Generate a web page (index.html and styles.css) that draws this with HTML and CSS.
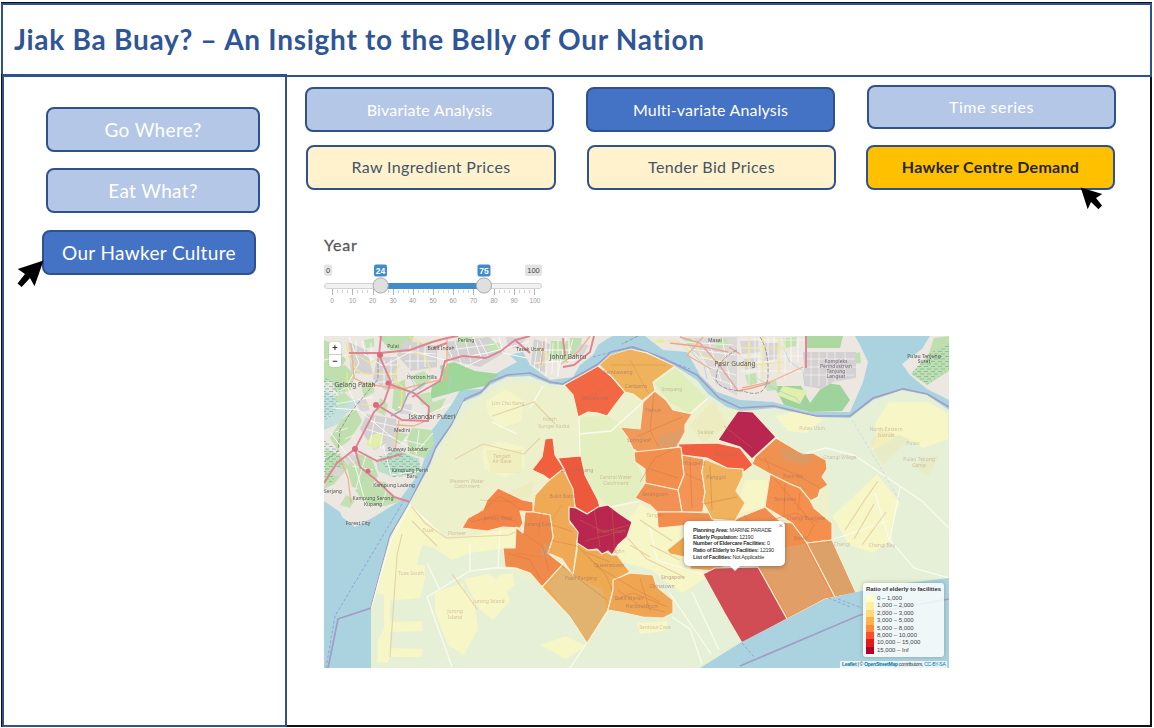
FILE: index.html
```html
<!DOCTYPE html>
<html lang="en">
<head>
<meta charset="utf-8">
<title>Jiak Ba Buay?</title>
<link rel="stylesheet" href="styles.css">
</head>
<body>
<div class="app">
<header class="header"><h1 class="title">Jiak Ba Buay? – An Insight to the Belly of Our Nation</h1></header>
<div class="body">
<nav class="side">
  <button class="btn soft big">Go Where?</button>
  <button class="btn soft big">Eat What?</button>
  <button class="btn strong big current">Our Hawker Culture</button>
</nav>
<main class="main">
  <div class="tabs first">
    <button class="btn soft">Bivariate Analysis</button>
    <button class="btn strong">Multi-variate Analysis</button>
    <button class="btn soft raised">Time series</button>
  </div>
  <div class="tabs second">
    <button class="btn cream">Raw Ingredient Prices</button>
    <button class="btn cream">Tender Bid Prices</button>
    <button class="btn gold">Hawker Centre Demand</button>
  </div>
  <section class="filter">
    <div class="year">Year</div>
    <svg class="slider" width="230" height="46" viewBox="320 262 230 46">
      <rect x="324" y="264.500" width="8" height="11.500" rx="2" fill="#e3e3e3"/><rect x="525" y="264.500" width="17" height="11.500" rx="2" fill="#e3e3e3"/>
      <rect x="324.500" y="283.500" width="217" height="5" rx="2.500" fill="#f1f1f0" stroke="#d2d2d2"/>
      <rect x="381" y="283" width="103" height="6" fill="#428bca"/>
      <path d="M332.500 289v6M352.500 289v6M373.500 289v6M393.500 289v6M413.500 289v6M433.500 289v6M453.500 289v6M473.500 289v6M494.500 289v6M514.500 289v6M534.500 289v6" stroke="#b5b5b5"/>
      <path d="M337.500 290v3M342.500 290v3M347.500 290v3M357.500 290v3M362.500 290v3M367.500 290v3M378.500 290v3M388.500 290v3M398.500 290v3M403.500 290v3M408.500 290v3M418.500 290v3M423.500 290v3M428.500 290v3M438.500 290v3M443.500 290v3M448.500 290v3M458.500 290v3M463.500 290v3M468.500 290v3M499.500 290v3M504.500 290v3M509.500 290v3M519.500 290v3M524.500 290v3M529.500 290v3" stroke="#d0d0d0"/>
      <rect x="374" y="264.500" width="13" height="12" rx="2" fill="#428bca"/><rect x="477.500" y="264.500" width="13" height="12" rx="2" fill="#428bca"/>
      <circle cx="380.700" cy="285.500" r="7.600" fill="#dfdfdf" stroke="#aaa"/><circle cx="484" cy="285.500" r="7.600" fill="#dfdfdf" stroke="#aaa"/>
      <g font-family="Liberation Sans, sans-serif" font-size="7.500" text-anchor="middle" fill="#444"><text x="328" y="273">0</text><text x="533.500" y="273">100</text><text x="380.500" y="273.500" font-size="8.500" fill="#fff" font-weight="bold">24</text><text x="484" y="273.500" font-size="8.500" fill="#fff" font-weight="bold">75</text></g>
      <g font-family="Liberation Sans, sans-serif" font-size="6.500" text-anchor="middle" fill="#999"><text x="332" y="303">0</text><text x="352.500" y="303">10</text><text x="372.500" y="303">20</text><text x="393" y="303">30</text><text x="412.500" y="303">40</text><text x="433" y="303">50</text><text x="453" y="303">60</text><text x="473.500" y="303">70</text><text x="494" y="303">80</text><text x="514" y="303">90</text><text x="535" y="303">100</text></g>
    </svg>
  </section>
  <section class="map">
    <svg class="tiles" width="625" height="332" viewBox="324 336 625 332">
      <defs>
        <filter id="soft"><feGaussianBlur stdDeviation="0.450"/></filter>
        <clipPath id="view"><rect x="324" y="336" width="625" height="332"/></clipPath>
        <pattern id="marsh" width="7" height="5" patternUnits="userSpaceOnUse"><path d="M0 1.500h4M3 4h4" stroke="#78b8a5" stroke-width=".8"/></pattern>
        <clipPath id="land"><path d="M324 336H613L607 339L598 345L593 355L580 365L573 377L550 380L530 365L523 352L510 355L517 362L502 370L488 379L483 389L460 390L452 404L432 430L430 442L420 472L398 502L382 512L372 518L355 527L342 517L340 512L324 501ZM645 336H855L860 345L868 362L863 382L850 412L807 412L773 402L740 400L717 392L700 375L687 352L663 350Z"/></clipPath>
        <clipPath id="sg"><path d="M410 502L430 465L436 449L452 425L463 402L480 395L490 385L507 377L530 376L550 384L563 385L598 366L610 355L630 349L647 352L675 366L697 380L708 394L727 407L740 411L753 410L775 408L793 412L817 417L850 418L873 400L902 390L927 395L949 410V578L907 583L856 592L825 599L740 643L700 668H371V608L390 537Z"/></clipPath>
      </defs>
      <g clip-path="url(#view)" filter="url(#soft)">
      <rect x="324" y="336" width="625" height="332" fill="#aad3df"/>
      <!-- mainland coast -->
      <g fill="#ece8e1">
        <path d="M324 336H613L607 339L598 345L593 355L580 365L573 377L550 380L530 365L523 352L510 355L517 362L502 370L488 379L483 389L460 390L452 404L432 430L430 442L420 472L398 502L382 512L372 518L355 527L342 517L340 512L324 501Z"/>
        <path d="M645 336H855L860 345L868 362L863 382L850 412L807 412L773 402L740 400L717 392L700 375L687 352L663 350Z"/>
        <path d="M930 336L922 349L902 364L910 375L927 389L949 400V336Z"/>
      </g>
      <path d="M324 391L336 396L344 405L352 398L360 402L347 413L338 424L324 430Z" fill="#c4dfdc"/>
      <g fill="#bfdfae">
        <path d="M324 340L337 346L346 360L333 380L324 383Z"/><path d="M329 370L345 365L355 376L350 391L336 393Z"/>
        <path d="M440 366L454 362L475 371L499 374L485 386L455 392L430 399L432 386L443 380Z" fill="#9fd69a"/>
        <path d="M412 428L432 430L434 444L425 458L410 454L407 440Z"/><path d="M378 336H414L409 350L390 350Z"/>
        <path d="M394 385L405 379L406 400L399 413L392 408Z"/><path d="M357 453L372 459L378 476L368 491L352 487L347 467Z"/>
        <path d="M341 420L356 409L362 421L349 441L337 449L330 438Z"/><path d="M376 461L395 449L419 459L421 473L393 477L378 471Z" fill="#bddfc8"/>
        <path d="M326 449L340 455L349 466L334 484L324 489Z"/><path d="M355 490L370 485L390 492L401 501L385 506L366 504Z"/>
        <path d="M805 336H843L840 348L806 348Z" fill="#add9a0"/><path d="M774 386L801 386L810 403L825 383L840 385L850 400L842 411L809 412L784 405Z" fill="#9fd39c"/>
        <path d="M853 354L860 352L861 363L852 364Z"/><path d="M934 338L949 336V371L927 385L911 374L928 356Z"/>
        <path d="M551 341H568V363L550 359Z"/><path d="M570 338H582L579 352L570 355Z"/>
      </g>
      <g fill="#d4d1d3">
        <path d="M377 357H397V388L385 390L373 379Z"/><path d="M367 414L396 419L399 436L374 450L360 429Z"/>
        <path d="M803 352H856V378L833 382L822 389L805 386Z"/><path d="M348 342L367 350L373 374L351 373Z"/>
        <path d="M404 340L437 346V367L411 371L397 355Z"/><path d="M681 338L737 337V396L716 384L704 362Z" opacity=".7"/>
        <path d="M445 342L489 337L505 352L480 367L449 360Z"/><path d="M534 339L550 344L545 373L531 364Z"/>
      </g>
      <path d="M324 377L342 386L335 413L324 421ZM378 457L396 449L420 461L421 475L393 477ZM927 355L949 343V369L927 385L911 374ZM324 440L339 451L345 464L331 483L324 483Z" fill="url(#marsh)"/>
      <path d="M372 435L381 432L383 443L375 449L365 444ZM777 395L783 386L807 391L800 404ZM651 342L663 338L664 343Z" fill="#e1efaa"/>
      <!-- parks and blocks between the main roads -->
      <g clip-path="url(#land)">
        <g fill="#c3e2b3"><path d="M334 398L344 392L351 399L342 408ZM361 385L371 381L375 392L364 398ZM411 376L424 371L431 379L420 390ZM380 398L388 404L385 416L376 411ZM408 434L400 444L390 441L396 432ZM346 495L355 500L350 508L340 505ZM375 481L386 482L388 491L378 489ZM417 395L430 392L433 403L422 405ZM427 404L446 398L440 410L429 415ZM458 337H473L468 345L456 344ZM490 341L501 344L497 353L487 350ZM684 337L694 340L690 348ZM715 340L727 338L728 346L717 349ZM745 375L756 373L757 383L748 386ZM783 338L797 337L796 346L785 348ZM765 382L776 380L778 390L767 391ZM364 340L374 338L374 347L366 348Z"/></g>
        <g fill="#d9d4d7"><path d="M356 400L366 399L370 410L360 412ZM398 405L412 404L411 414L400 414ZM344 457L353 453L357 461L348 464ZM385 453L395 447L394 437L386 440ZM506 337L526 338L519 349L508 347ZM571 359L583 355L589 345L580 344ZM740 341L759 340L760 352L742 354ZM765 343L778 343L777 359L764 361ZM744 359L757 358V368L745 370ZM336 466L344 470L339 477L331 474ZM422 350L436 349L436 358L423 360Z"/></g>
        <g fill="none" stroke="#aacfdd" stroke-width=".8"><path d="M784 349L790 362L803 371L805 386M757 378L775 389L796 398L806 409M440 372L451 378L449 391M408 373L415 386L405 401M360 460L366 473L360 486M534 348L542 358L540 372M697 340L692 353L704 365L707 379"/></g>
        <g fill="none" stroke="#fff" stroke-width=".7"><path d="M329 396L362 380M336 404L373 397M356 340V353M362 341L366 356M371 343V361M384 360V387M391 359V387M378 365H397M378 374H397M378 382H396M370 421L397 427M366 429L392 437M375 417L370 444M386 418L380 448M410 345V369M418 343V369M425 346V367M401 352L436 354M405 361L436 361M455 341L461 364M465 340L471 362M479 339L488 356M493 338L500 350M449 350L495 344M684 342L733 345M690 349L736 355M700 357L736 365M706 366L736 375M712 377L735 386M693 339L709 371M708 338L721 381M722 338L732 391M740 348H768M742 363L775 361M755 338V370M768 337V366M774 337V360M791 337V365M798 337V362M538 342L534 368M543 342L539 373M553 343L552 374M558 340V376M573 339L568 357M335 432L348 428M345 439L354 435M352 466L373 470M366 455L356 488M388 485L382 505M404 440L425 445M419 430L416 455"/></g>
      </g>
      <!-- streets -->
      <g fill="none" stroke="#fbfaf3" stroke-width="1">
        <path d="M324 360L361 352L383 366L412 351L445 360L487 353L529 342M332 408L359 410L389 435L416 452L433 433M349 337L359 363L347 386L357 407M330 432L355 465L366 505M440 336L452 356L442 371M473 337L482 359L465 367M499 337L503 353L527 358M398 407L425 416L451 404M383 445L391 475L419 471M534 350H572M535 363L575 360M546 337V376M566 337L557 377"/>
        <path d="M805 359H855M805 367H858M805 375H854M811 352V386M819 352V386M827 352V386M835 352V382M845 352V378M741 340H804M742 356H803M741 371H803M749 337V387M759 337V387M785 337V379" stroke-width=".6"/>
      </g>
      <g fill="none" stroke="#eee88d" stroke-width="1.200">
        <path d="M346 342Q351 378 374 374T397 388M409 337L427 345L441 338M400 365Q389 378 402 386L401 411M347 372V391M361 404L375 406M409 350L425 356L431 370M348 350L370 363L384 355"/>
        <path d="M749 337V362L740 368M763 336V379M779 338V374M741 348H790M742 366L784 362M534 347L549 355L538 369M655 342L675 340L692 353M690 337L703 356L736 365"/>
      </g>
      <g fill="none" stroke="#f1b18d" stroke-width="1.300"><path d="M351 343L354 378L366 384L402 389L448 378M447 337V380M397 425L414 426L430 419M399 420L395 452M339 456L348 478L351 503M742 388L770 382L803 367M590 336L579 351L561 364M703 337L687 355L711 369M544 341L541 365"/></g>
      <g fill="none" stroke="#df8493" stroke-width="1.900">
        <path d="M381 336L379 355L391 382L384 402L374 412L355 449L360 467L375 479L394 497L410 502"/>
        <path d="M349 353H380L410 350L432 342L447 338L458 336"/>
        <path d="M389 384L414 393L429 407L428 421L402 420L374 403"/>
        <path d="M412 397L440 381L445 361L463 356L486 358L501 351L515 340L530 336M515 340L530 353M433 348L447 343"/>
        <path d="M355 449L337 463L324 483M358 451L377 461L402 454M594 336L590 352L574 365L563 367M563 338L565 356M806 336V368"/>
        <path d="M680 337L700 343L720 366L738 391L752 388L770 383M729 347L740 354M670 343L704 347L728 352" stroke="#eaa494" stroke-width="1.400"/>
      </g>
      <g fill="#d96b80"><circle cx="380" cy="355" r="3"/><circle cx="388" cy="383" r="2.500"/><circle cx="376" cy="405" r="3"/><circle cx="355" cy="449" r="3"/><circle cx="368" cy="471" r="2.500"/></g>
      <g fill="none" stroke="#8b858f" stroke-width=".8" stroke-dasharray="4 1.500"><path d="M378 358V379L351 412L340 430L338 451L325 461M760 337Q769 350 768 375T743 391M638 336L622 344M737 350Q716 360 716 380Q720 390 743 391"/></g>
      <path d="M391 416L401 411L408 394L425 383" fill="none" stroke="#b3a0bf" stroke-width="1.500"/>
      <!-- sea boundaries -->
      <g fill="none" stroke="#a39dc6" stroke-width="1.700">
        <path d="M328 668L338 619L371 608L390 536L410 502L430 462L436 447L452 424L465 399L481 392L490 382L507 375L530 373L550 382L563 384L598 364L611 352L633 347L663 358L697 375L719 398L740 408L774 406L816 416L850 416L873 398L903 389L927 394L949 407"/>
        <path d="M740 666L860 615L949 599"/>
      </g>
      <g fill="none" stroke="#8ba5dd" stroke-width="1" stroke-dasharray="3 2"><path d="M326 668L335 616L403 502M593 357L630 347L690 369M838 599L862 608M824 596L850 607M742 643L754 657"/></g>
      <!-- planning areas backdrop -->
      <g clip-path="url(#sg)">
        <rect x="365" y="345" width="585" height="325" fill="#e5f0d6"/>
        <path d="M411 503L456 424L480 397L510 380L564 388L631 352L716 406L752 413L735 438L810 458L830 490L831 540L757 520L703 574L690 592L640 560L620 552L543 586L503 567L504 535L479 548L436 548L411 533L401 576L389 593L374 586L391 539Z" fill="#edf1cb"/>
        <g fill="#f6f6c7">
          <path d="M395 527L411 505L434 528L450 540L500 530L515 529V547L470 553L452 560L434 548L422 545L417 565H425V579L420 598L390 601V622L422 621V631L390 632V648L422 649V657H390L387 663L377 662L378 639L384 629V595L377 593Z"/>
          <path d="M435 592L463 583L464 590L474 600L478 629L464 655L448 645L435 612Z"/>
          <path d="M464 579L488 574L504 584L510 601L493 620L479 609Z"/><path d="M493 586L498 575L513 573L515 585L506 592Z"/>
          <path d="M832 516L850 500L877 474L900 503L892 523L890 541L873 553L849 545Z"/>
          <path d="M875 423L889 402L929 402L948 414V439L923 448L900 435L871 451L876 438Z"/>
          <path d="M775 416L797 411L824 419L806 433L788 431Z"/><path d="M486 401L506 389L524 401L521 421L500 429L488 414Z" opacity=".7"/>
          <path d="M482 449L500 441L524 447L525 468L505 478L484 469Z" opacity=".7"/><path d="M617 535L640 504L680 525L706 578L682 593L651 570L617 560Z"/>
          <path d="M735 515L745 480L770 480L765 506ZM540 645L566 636L586 646L566 659ZM637 623L668 621L665 631L640 634Z"/>
        </g>
        <g fill="#dfeebb"><path d="M578 417L607 416L637 434L634 459L646 483L640 502L610 507L587 488L579 457Z" opacity=".7"/><path d="M654 383L676 368L707 398L689 413L670 403Z"/></g>
        <g fill="#eee5af" opacity=".4"><path d="M486 450H522V473H491ZM482 505L535 480L530 497ZM881 429L910 439L883 465L870 442ZM910 465L939 455L928 476ZM690 425L713 400L727 425L703 443Z"/></g>
        <!-- residential boundaries -->
        <g fill="none" stroke="#fafbee" stroke-width="1.300">
          <path d="M371 608L391 540L410 505L445 538M543 587L531 573L516 568L495 568L470 571L427 597L452 667M427 563L440 590M530 408L543 386M579 417L580 457M579 434L611 431L642 403M690 414L708 398M607 508L615 506L640 501M608 611L570 668M692 592L719 650M672 617L690 629L702 664M669 592L711 654M753 458L803 454L826 448L854 455L922 501L949 528M900 487L890 540L914 568L949 578M875 493L889 540M492 422L517 434M831 540L888 521M470 570V544M498 568L500 531M535 498L550 480M650 527L657 560L705 575"/>
        </g>
        <g fill="none" stroke="#e5d4a4" stroke-width="1.100"><path d="M411 506L425 523L446 538L509 535L521 529M412 521L437 546M402 534L397 555L390 657M452 574L477 609M455 459L483 444L524 454L540 438M492 416L534 402L555 424M624 534L647 559L682 576M845 530L866 498L878 481M854 539L874 504M862 545L886 512M650 545L680 560M630 545L650 557M640 520L672 541"/></g>
        <g fill="none" stroke="#d9cfe2" stroke-width=".8" stroke-dasharray="3 2"><path d="M852 420L882 470L900 501M635 616L613 600"/></g>
        <!-- shaded planning areas -->
        <g stroke="#f8efd4" stroke-width="1.200" stroke-linejoin="round">
          <path fill="#f26745" d="M564 385L598 366L612 377L625 392L615 405L607 416L598 413L588 412L578 417L573 395Z"/>
          <path fill="#efb25d" d="M599 365L610 355L630 349L647 353L675 366L653 382L655 391L642 401L633 394L625 392L612 377Z"/>
          <path fill="#ef9a59" d="M655 391L666 400L673 410L692 414L685 425L685 432L677 447L640 453L633 449L628 438L620 427L640 429L643 402Z"/>
          <path fill="#f25f40" d="M678 444L717 443L740 448L753 465L744 472L727 468L707 458L682 455Z"/>
          <path fill="#b92750" d="M718 440L728 425L738 411L753 412L776 437L752 459L740 447Z"/>
          <path fill="#f0914f" d="M776 438L803 454L813 453L826 460L827 469L822 477L828 485L820 490L818 497L810 501L800 488L790 484L770 474L752 464L755 457Z"/>
          <path fill="#f48f4e" d="M770 474L790 484L800 488L810 500L814 508L832 523L832 540L807 543L792 523L765 507Z"/>
          <path fill="#f28e4c" d="M715 530L740 517L765 507L781 522L792 523L807 543L835 597L825 599L787 619L757 566L730 560Z"/>
          <path fill="#e79654" d="M832 540L856 593L835 597L807 543Z"/>
          <path fill="#f28f50" d="M634 452L663 449L681 447L682 455L684 475L678 490L645 483L645 469L635 462Z"/>
          <path fill="#f39555" d="M682 455L704 459L702 472L705 492L703 512L682 512L678 490L684 475Z"/>
          <path fill="#f19152" d="M645 483L678 490L682 512L657 512L650 505L635 498Z"/>
          <path fill="#f18d4e" d="M657 512H682L712 513L715 524L690 525L658 528Z"/>
          <path fill="#f0b25c" d="M704 459L727 468L743 469V476L736 491L745 503L735 521L712 519L703 502L705 492L702 472Z"/>
          <path fill="#f25e3d" d="M545 439L553 438L555 455L564 469L550 480L543 475L532 470L542 457Z"/>
          <path fill="#ee593c" d="M558 458L581 456L585 475L598 500L600 507L587 514L575 507L572 490L564 469Z"/>
          <path fill="#f0aa56" d="M563 469L573 489L575 507L569 509L570 523L580 532L577 545L573 575L562 559L548 553L553 537L550 515L533 512L535 495L547 482Z"/>
          <path fill="#f38548" d="M462 528L468 518L483 510L487 500L498 488L523 500L533 502L533 512L520 511L523 523L520 528L503 527L487 531Z"/>
          <path fill="#f08a4c" d="M516 527L523 533L525 512H533L550 515L553 537L548 553L563 565L542 587L530 573L516 568L505 567L503 548H515Z"/>
          <path fill="#edaa53" d="M577 540L588 550L602 550L612 555L617 555L630 572L615 580L613 590L608 610L587 643L570 617L542 587L563 564L573 575L577 550Z"/>
          <path fill="#f0a552" d="M630 573L653 575L657 587L673 600L673 613L663 618L643 617L620 612L608 610L613 590L613 580Z"/>
          <path fill="#b92750" d="M569 507L576 508L587 514L598 507L608 505L620 514L632 522L627 537L618 545L612 555L608 551L602 554L597 549L588 550L577 543L578 532L569 520Z"/>
          <path fill="#f0a64b" d="M667 550L683 537L715 540L738 560L715 571L691 569L685 557L670 554Z"/>
          <path fill="#d14d57" d="M703 574L715 568L758 567L787 619L742 643L725 614Z"/>
        </g>
        <path d="M562 567L579 578L603 590L607 610L587 640L569 615L547 586Z" fill="#d8b985" opacity=".55"/>
        <path d="M759 566L764 550L805 544L832 596L825 598L788 617ZM832 542L855 592L836 596L808 545Z" fill="#d6a878" opacity=".6"/>
        <path d="M660 435L683 430L676 446L657 448ZM780 447L813 456L806 466L782 460ZM545 543L552 550L546 560L540 551Z" fill="#c7a47d" opacity=".45"/>
        <!-- streets inside the shaded areas -->
        <g fill="none" stroke="#c9723f" stroke-width=".8" opacity=".5">
          <path d="M654 393L650 430L658 446M579 401L598 392L612 380M584 412L577 403M552 445L546 475M571 463L585 500M480 512L500 496L522 510M471 522L498 515L519 523M523 533L543 547L549 572M553 525L573 532M550 540L577 546L600 568L633 588L660 602M585 541L626 530M580 520L604 532L629 525M594 508L600 547M612 508L615 553M615 600L633 593L668 607M640 482L655 458L674 449M650 469L678 478M690 457L692 508M710 466L712 510M686 474L702 481M756 457L795 474L820 488M775 479L814 525L806 540M765 522L795 513L818 522M703 504L737 497M724 426L752 448M687 448L735 460M638 436L682 417M558 563L579 579L607 600M640 578L650 611M744 515L768 552M785 484L784 516M588 557L606 575L612 590M582 551L610 562M618 590L640 606L665 612M508 553L530 560L541 580M765 457L770 470M800 493L798 510"/>
          <path d="M562 505L551 521M542 512L538 537M630 360L649 394M603 372L621 390M611 365H666M480 500L520 502M514 553L542 557" opacity=".6"/>
        </g>
      </g>
      <!-- place names -->
      <g font-family="Noto Sans, sans-serif" text-anchor="middle" fill="#555" font-size="5">
        <g font-size="6.500"><text x="355" y="387">Gelang Patah</text><text x="432" y="419" font-size="6.500">Iskandar Puteri</text><text x="568" y="359">Johor Bahru</text><text x="735" y="366">Pasir Gudang</text></g>
        <text x="393" y="348">Pulai</text><text x="441" y="350">Bukit Indah</text><text x="466" y="342">Perling</text><text x="422" y="379">Horizon Hills</text><text x="402" y="432">Medini</text><text x="408" y="451">Sunway Iskandar</text><text x="410" y="472">Kampung Perin</text><text x="412" y="478">Baru</text><text x="394" y="487">Kampung Ladang</text><text x="373" y="500">Kampung Serong</text><text x="358" y="525">Forest City</text><text x="373" y="506">Kupang</text><text x="333" y="493">Serjang</text><text x="530" y="351">Tasek Utara</text><text x="715" y="342">Masai</text>
        <g fill="#766979"><text x="836" y="363">Kompleks</text><text x="836" y="368">Perindustrian</text><text x="836" y="373">Tanjung</text><text x="836" y="378">Langsat</text></g><text x="924" y="358">Pulau Tanjung</text><text x="924" y="363">Surat</text>
      </g>
      <g font-family="Noto Sans, sans-serif" text-anchor="middle" font-size="5" fill="#a36f64" opacity=".65">
        <g opacity=".6"><text x="508" y="405">Lim Chu Kang</text><text x="502" y="458">Tengah</text><text x="502" y="463">Air Base</text><text x="467" y="483">Western Water</text><text x="467" y="488">Catchment</text><text x="550" y="421">North</text><text x="554" y="428">Sungei Kadut</text><text x="616" y="479">Central Water</text><text x="616" y="485">Catchment</text><text x="672" y="391">Simpang</text><text x="706" y="434">Seletar</text><text x="812" y="430">Pulau Ubin</text><text x="840" y="459">Changi Village</text><text x="886" y="431">North-Eastern</text><text x="886" y="437">Islands</text><text x="913" y="445">Pulau</text><text x="919" y="461">Pulau Tekong</text><text x="919" y="467">Camp</text><text x="428" y="532">Tuas</text><text x="457" y="535">Pioneer</text><text x="411" y="575">Tuas South</text><text x="455" y="613">Jurong</text><text x="455" y="619">Island</text><text x="489" y="603">Jurong Island</text><text x="842" y="546">Changi</text><text x="882" y="547">Changi Bay</text><text x="655" y="629">Sentosa Cove</text><text x="655" y="517">Tanglin</text><text x="616" y="553">Tanglin</text></g>
        <text x="595" y="400">Woodlands</text><text x="618" y="374">Sembawang</text><text x="636" y="388">Canberra</text><text x="653" y="412">Yishun</text><text x="639" y="442">Springleaf</text><text x="726" y="456">Sengkang</text><text x="793" y="478">Pasir Ris</text><text x="785" y="501">Tampines</text><text x="806" y="520">Changi Business</text><text x="800" y="540">Simei</text><text x="694" y="465">Hougang</text><text x="716" y="479">Punggol</text><text x="655" y="496">Serangoon</text><text x="577" y="472">Bukit Panjang</text><text x="563" y="498">Bukit Batok</text><text x="498" y="520">Jurong West</text><text x="538" y="526">Jurong East</text><text x="581" y="580">Pasir Panjang</text><text x="609" y="567">Queenstown</text><text x="629" y="600">Bukit Merah</text><text x="642" y="608">HarbourFront</text><text x="611" y="533">Bukit Timah</text><text x="673" y="579">Singapore</text><text x="662" y="588">Chinatown</text>
      </g>
      </g>
    </svg>
    <div class="zoomer"><span>+</span><span>−</span></div>
    <div class="popup"><i>×</i><p><b>Planning Area:</b> MARINE PARADE</p><p><b>Elderly Population:</b> 12190</p><p><b>Number of Eldercare Facilities:</b> 0</p><p><b>Ratio of Elderly to Facilities:</b> 12190</p><p><b>List of Facilities:</b> Not Applicable</p></div>
    <div class="legend"><b>Ratio of elderly to facilities</b>
      <p><i class="c1"></i>0 – 1,000</p><p><i class="c2"></i>1,000 – 2,000</p><p><i class="c3"></i>2,000 – 3,000</p><p><i class="c4"></i>3,000 – 5,000</p><p><i class="c5"></i>5,000 – 8,000</p><p><i class="c6"></i>8,000 – 10,000</p><p><i class="c7"></i>10,000 – 15,000</p><p><i class="c8"></i>15,000 – Inf</p></div>
    <div class="credit"><b>Leaflet</b> | © <b>OpenStreetMap</b> contributors, <em>CC-BY-SA</em></div>
  </section>
</main>
</div>
<svg class="pointers" width="1154" height="728" viewBox="0 0 1154 728"><path d="M43.500 260.500L17.700 269L25 274L17.500 283.500L21.700 287L30 278L34.500 286.300ZM1080.700 187.500L1102.300 194L1096 198L1102 205.500L1098.500 209.300L1091 202L1087.700 209.300Z"/></svg>
</div>
</body>
</html>
```
FILE: styles.css
```css
* { box-sizing: border-box; }
body { margin: 0; background: #fff; font-family: Lato, sans-serif; }
.app { position: relative; width: 1154px; height: 728px; padding: 2px 2px 1px 1px; overflow: hidden; }
.header { height: 74px; margin-top: 1px; border: 2px solid #2f528f; box-shadow: 0 -1px #111; padding: 0 0 3px 11px; display: flex; align-items: center; }
.title { margin: 0; color: #2f5597; font-size: 28px; line-height: 40px; font-weight: 700; white-space: nowrap; letter-spacing: .73px; }
.body { display: flex; height: 653px; margin-top: -3px; border-left: 1px solid #111; }
.side { width: 285px; height: 653px; border: 2px solid #2f528f; padding: 31px 0 0 42px; display: flex; flex-direction: column; gap: 16px; }
.main { flex: 1; margin-top: 3px; border: solid #111; border-width: 0 2px 2px 0; padding: 10px 0 0 18px; height: 650px; }
.btn { width: 249px; height: 45px; flex: none; border: 2px solid #2f528f; border-radius: 8px; padding: 1px 0 0; font: 400 16px/20px Lato, sans-serif; letter-spacing: .17px; color: #fff; white-space: nowrap; }
.big { width: 214px; font-size: 19px; letter-spacing: .35px; }
.current { margin: 1px 0 0 -4px; }
.soft { background: #b4c7e7; }
.strong { background: #4472c4; }
.cream { background: #fff2cc; color: #44546a; width: 250px; padding: 0 0 1px; letter-spacing: .35px; }
.gold { background: #ffc000; color: #262626; font-weight: 700; padding: 0 0 1px; letter-spacing: .3px; }
.tabs { display: flex; gap: 32px; height: 45px; }
.second { margin: 13px 0 0 1px; gap: 31px; }
.second .btn:nth-child(2) { width: 249px; }
.second .btn:nth-child(3) { margin-left: -1px; }
.raised { margin-top: -2px; height: 44px; padding: 0 0 1px; letter-spacing: .5px; }
.filter { margin: 44px 0 0 15px; height: 74px; }
.year { margin-left: 4px; height: 28px; font-size: 16px; line-height: 22px; color: #595959; letter-spacing: .8px; -webkit-text-stroke: .3px #595959; }
.slider { display: block; }
.map { position: relative; width: 625px; height: 332px; margin: 28px 0 0 19px; font: 5.500px/6.700px "Liberation Sans", sans-serif; color: #333; }
.map p { margin: 0; }
.tiles { display: block; }
.zoomer { position: absolute; left: 5px; top: 6px; width: 12px; height: 25px; background: #fff; border-radius: 2px; display: grid; grid-template-rows: 12px 12px; font: bold 9px/12px "Liberation Sans", sans-serif; text-align: center; box-shadow: 0 0 1px #777; }
.zoomer span + span { border-top: 1px solid #ccc; }
.popup { position: absolute; left: 360px; top: 185px; width: 101px; height: 45px; border-radius: 5px; background: #fff; padding: 6px 0 0 9px; box-shadow: 0 1px 4px #5559; white-space: nowrap; letter-spacing: -.27px; }
.popup p:nth-of-type(1) { letter-spacing: -.24px; }
.popup::after { content: ""; position: absolute; left: 45px; top: 44px; border: solid transparent; border-width: 6px 6px 0; border-top-color: #fff; }
.popup i { position: absolute; right: 2px; top: 2px; font-style: normal; font-size: 8px; color: #888; }
.legend { position: absolute; left: 539px; top: 247px; width: 81px; height: 74px; background: #ffffffd0; border-radius: 3px; box-shadow: 0 0 4px #5556; padding: 3px; line-height: 7.400px; font-size: 6px; white-space: nowrap; color: #444; }
.legend > b { display: block; height: 8px; color: #333; font-size: 5.900px; }
.legend p { display: flex; height: 7.400px; align-items: flex-start; position: relative; top: 1px; }
.legend i { width: 8px; margin-right: 3px; height: 7.500px; }
.c1 { background: #ffffcc; } .c2 { background: #ffeda0; } .c3 { background: #fed976; } .c4 { background: #feb24c; }
.c5 { background: #fd8d3c; } .c6 { background: #fc4e2a; } .c7 { background: #e31a1c; } .c8 { background: #b10026; }
.credit { position: absolute; right: 2px; bottom: 0; width: 107px; height: 7px; background: #ffffffc0; font-size: 5px; line-height: 7px; white-space: nowrap; padding-left: 2px; letter-spacing: -.26px; }
.credit b, .credit em { color: #0078a8; font-style: normal; }
.pointers { position: absolute; left: 0; top: 0; pointer-events: none; }
```
